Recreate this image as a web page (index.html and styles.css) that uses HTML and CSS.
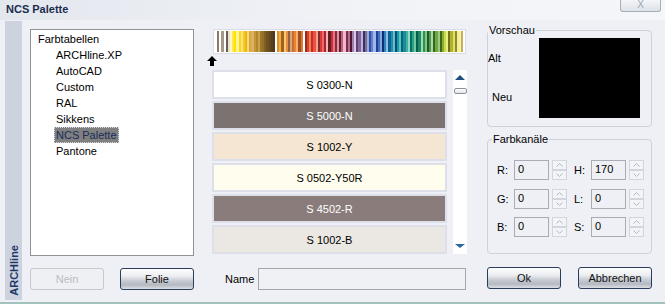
FILE: index.html
```html
<!DOCTYPE html>
<html lang="de">
<head>
  <meta charset="UTF-8" />
  <title>NCS Palette</title>
  <link rel="stylesheet" href="styles.css">
</head>
<body>
  <div class="window">
    <div class="titlebar">
      <span class="title">NCS Palette</span>
      <span class="close">X</span>
    </div>
    <div class="frame">
      <div class="sidebar"><span>ARCHline</span></div>

      <div class="col-left">
        <div class="tree">
          <div class="node root"><span>Farbtabellen</span></div>
          <div class="node"><span>ARCHline.XP</span></div>
          <div class="node"><span>AutoCAD</span></div>
          <div class="node"><span>Custom</span></div>
          <div class="node"><span>RAL</span></div>
          <div class="node"><span>Sikkens</span></div>
          <div class="node"><span class="selected">NCS Palette</span></div>
          <div class="node"><span>Pantone</span></div>
        </div>
        <div class="buttons">
          <button class="btn" disabled>Nein</button>
          <button class="btn">Folie</button>
        </div>
      </div>

      <div class="col-mid">
        <div class="strip" id="strip"></div>
        <svg class="marker" width="10" height="10" viewBox="0 0 10 10">
          <polygon points="5,0 10,5 7,5 7,10 3,10 3,5 0,5" fill="#000"/>
        </svg>
        <div class="list-area">
          <div class="swatches">
            <div class="swatch s-0300n">S 0300-N</div>
            <div class="swatch s-5000n dark">S 5000-N</div>
            <div class="swatch s-1002y">S 1002-Y</div>
            <div class="swatch s-0502y50r">S 0502-Y50R</div>
            <div class="swatch s-4502r dark">S 4502-R</div>
            <div class="swatch s-1002b">S 1002-B</div>
          </div>
          <div class="scroll">
            <span class="tri-up"></span>
            <span class="thumb"></span>
            <span class="fill"></span>
            <span class="tri-down"></span>
          </div>
        </div>
        <div class="name-row">
          <label>Name</label>
          <div class="name-input"></div>
        </div>
      </div>

      <div class="col-right">
        <fieldset class="group">
          <legend class="legend-a">Vorschau</legend>
          <div class="preview">
            <div class="preview-labels">
              <span class="alt">Alt</span>
              <span class="neu">Neu</span>
            </div>
            <div class="preview-box"></div>
          </div>
        </fieldset>

        <fieldset class="group channels">
          <legend class="legend-b">Farbkanäle</legend>
          <div class="fields">
            <div class="field"><span class="lbl">R:</span><span class="num">0</span><span class="spin"><i><svg width="7" height="4"><polyline points="0.5,3.5 3.5,0.5 6.5,3.5" fill="none" stroke="#b3b7c0"/></svg></i><i><svg width="7" height="4"><polyline points="0.5,0.5 3.5,3.5 6.5,0.5" fill="none" stroke="#b3b7c0"/></svg></i></span></div>
            <div class="field"><span class="lbl">H:</span><span class="num">170</span><span class="spin"><i><svg width="7" height="4"><polyline points="0.5,3.5 3.5,0.5 6.5,3.5" fill="none" stroke="#b3b7c0"/></svg></i><i><svg width="7" height="4"><polyline points="0.5,0.5 3.5,3.5 6.5,0.5" fill="none" stroke="#b3b7c0"/></svg></i></span></div>
            <div class="field"><span class="lbl">G:</span><span class="num">0</span><span class="spin"><i><svg width="7" height="4"><polyline points="0.5,3.5 3.5,0.5 6.5,3.5" fill="none" stroke="#b3b7c0"/></svg></i><i><svg width="7" height="4"><polyline points="0.5,0.5 3.5,3.5 6.5,0.5" fill="none" stroke="#b3b7c0"/></svg></i></span></div>
            <div class="field"><span class="lbl">L:</span><span class="num">0</span><span class="spin"><i><svg width="7" height="4"><polyline points="0.5,3.5 3.5,0.5 6.5,3.5" fill="none" stroke="#b3b7c0"/></svg></i><i><svg width="7" height="4"><polyline points="0.5,0.5 3.5,3.5 6.5,0.5" fill="none" stroke="#b3b7c0"/></svg></i></span></div>
            <div class="field"><span class="lbl">B:</span><span class="num">0</span><span class="spin"><i><svg width="7" height="4"><polyline points="0.5,3.5 3.5,0.5 6.5,3.5" fill="none" stroke="#b3b7c0"/></svg></i><i><svg width="7" height="4"><polyline points="0.5,0.5 3.5,3.5 6.5,0.5" fill="none" stroke="#b3b7c0"/></svg></i></span></div>
            <div class="field"><span class="lbl">S:</span><span class="num">0</span><span class="spin"><i><svg width="7" height="4"><polyline points="0.5,3.5 3.5,0.5 6.5,3.5" fill="none" stroke="#b3b7c0"/></svg></i><i><svg width="7" height="4"><polyline points="0.5,0.5 3.5,3.5 6.5,0.5" fill="none" stroke="#b3b7c0"/></svg></i></span></div>
          </div>
        </fieldset>

        <div class="buttons buttons-right">
          <button class="btn">Ok</button>
          <button class="btn">Abbrechen</button>
        </div>
      </div>
    </div>
  </div>

  <script>
    // farbleiste oben
    const colors = [
      "#fff","#8c7b6b","#fff","#a89888","#fff","#6e5e50","#e8e0d0",
      "#fff8c0","#ffe84a","#ffe000","#fff2a0","#ffd800",
      "#fbe090","#f8c830","#f0b800","#f5d890","#e0a820",
      "#d8b070","#c89830","#b08828","#c8a050","#a07820","#907030","#806020","#705020","#604818","#584020","#4e3a1c",
      "#fff",
      "#d89030","#f0b040","#a06020","#f8c878","#e89040","#906040","#e0a070","#c07030","#f08030","#f8b070","#a05020","#e07830",
      "#fff","#903020","#e04020","#f08060","#c03020","#f05040","#f8a090","#803028","#d83838","#f06868","#a02830","#f8b0b0","#602020","#c83040","#f07080","#803040",
      "#e090a0","#602030","#c06080","#f0b8c8","#802850","#b07090","#501830",
      "#a080b0","#d8c8e0","#604070","#8068a0","#c0b0d8","#403060","#7070a0","#a0a8d0",
      "#3050b0","#6080d0","#a0b8e8","#204090","#4070c0","#80a8e0","#103070",
      "#3080c0","#90c0e0","#106090","#2090b0","#70b8d0","#005070","#1898a8","#60c0c8","#006878","#208898",
      "#40b0a0","#90d8c8","#007060","#30a080","#70c8a8","#006048","#208868","#a0d8c0",
      "#30904a","#80c880","#205830","#509850","#b0d8a0","#306828","#70a840","#a0c880","#406818","#88b030",
      "#c8d850","#e8f080","#707020","#b0b030","#e0e060","#908838","#f0f090","#fff0a0","#c0b060"
    ];
    const strip = document.getElementById("strip");
    colors.forEach(c => {
      const s = document.createElement("span");
      s.style.background = c;
      strip.appendChild(s);
    });
  </script>
</body>
</html>
```

FILE: styles.css
```css
* {
  box-sizing: border-box;
}
body {
  margin: 0;
  font-family: "Liberation Sans", Arial, sans-serif;
  font-size: 11px;
  color: #000;
  background: #fff;
}
.window {
  width: 665px;
  height: 304px;
  background: #eff0f5;
  border-bottom: 2px solid #a3c4bc;
  display: flex;
  flex-direction: column;
}
.titlebar {
  height: 20px;
  display: flex;
  justify-content: space-between;
  align-items: flex-start;
  background: linear-gradient(90deg, #e3e7ee, #f1f3f7 55%, #f5f6f9);
}
.title {
  font-weight: bold;
  color: #1b2c4e;
  margin: 1px 0 0 6px;
  line-height: 16px;
}
.close {
  width: 41px;
  height: 12px;
  margin-right: 4px;
  border: 1px solid #a8aeb8;
  border-top: none;
  border-radius: 0 0 3px 3px;
  background: linear-gradient(#f4f5f8, #dde1e8);
  color: #a0a6b0;
  font-size: 10px;
  line-height: 9px;
  text-align: center;
}
.frame {
  flex: 1;
  display: flex;
  padding-left: 5px;
}
.sidebar {
  width: 17px;
  margin: 1px 0 2px;
  background: #ccd3df;
  display: flex;
  flex-direction: column;
  justify-content: flex-end;
  align-items: center;
  padding-bottom: 4px;
}
.sidebar span {
  writing-mode: vertical-rl;
  transform: rotate(180deg);
  font-weight: bold;
  color: #1d3766;
  line-height: 12px;
}

/* linke spalte */
.col-left {
  width: 164px;
  margin-left: 8px;
  padding-top: 9px;
  display: flex;
  flex-direction: column;
}
.tree {
  height: 227px;
  background: #fff;
  border: 1px solid #8f9296;
  padding-top: 1px;
}
.node {
  height: 16px;
  line-height: 16px;
  padding-left: 23px;
}
.node.root {
  padding-left: 5px;
}
.node span {
  display: inline-block;
  padding: 0 2px;
}
.node .selected {
  background: #808080;
  color: #1a2c5a;
  outline: 1px dotted #d5d8e0;
  outline-offset: -1px;
}
.buttons {
  display: flex;
  justify-content: space-between;
  margin-top: 12px;
}
.btn {
  width: 74px;
  height: 22px;
  padding: 0;
  font: 11px "Liberation Sans", Arial, sans-serif;
  color: #111;
  border: 1px solid #2b3d5c;
  border-radius: 3px;
  background: linear-gradient(#fdfdfd 0%, #eceef1 35%, #c6cad1 60%, #b5b9c1 80%, #dcdfe4 100%);
}
.btn:disabled {
  border-color: #c5c8ce;
  background: #eff0f3;
  color: #b9bcc3;
}

/* mittlere spalte */
.col-mid {
  width: 260px;
  margin-left: 13px;
  padding-top: 9px;
}
.strip {
  margin-left: 6px;
  width: 253px;
  height: 25px;
  border: 1px solid #dadde5;
  padding: 1px;
  display: flex;
  background: #fff;
}
.strip span {
  flex: 1;
}
.marker {
  display: block;
  margin-top: 2px;
}
.list-area {
  display: flex;
  margin-top: 4px;
  height: 184px;
}
.swatches {
  margin-left: 5px;
  width: 235px;
  display: flex;
  flex-direction: column;
  gap: 2px;
}
.swatch {
  height: 29px;
  border: 2px solid #dde0e9;
  display: flex;
  align-items: center;
  justify-content: center;
}
.swatch.dark {
  color: #fff;
}
.s-0300n { background: #fff; }
.s-5000n { background: #7b7370; }
.s-1002y { background: #f5e6d4; }
.s-0502y50r { background: #fffdee; }
.s-4502r { background: #8a7c7a; }
.s-1002b { background: #ebe8e4; }
.scroll {
  width: 14px;
  margin-left: 6px;
  background: #fff;
  display: flex;
  flex-direction: column;
  align-items: center;
  padding: 5px 0 6px;
}
.tri-up {
  width: 0;
  height: 0;
  border-left: 5px solid transparent;
  border-right: 5px solid transparent;
  border-bottom: 5px solid #1e4f80;
}
.thumb {
  width: 13px;
  height: 6px;
  margin-top: 8px;
  border: 1px solid #8c9098;
  border-radius: 2px;
  background: linear-gradient(#fdfdfd, #e2e4e8);
}
.fill {
  flex: 1;
}
.tri-down {
  width: 0;
  height: 0;
  border-left: 5px solid transparent;
  border-right: 5px solid transparent;
  border-top: 4px solid #2a6aa0;
}
.name-row {
  display: flex;
  align-items: center;
  margin-top: 14px;
  padding-left: 18px;
}
.name-input {
  width: 208px;
  height: 22px;
  margin-left: 4px;
  border: 1px solid #a2a5ab;
  background: #f0f1f5;
}

/* rechte spalte */
.col-right {
  width: 165px;
  margin-left: 20px;
  padding-top: 4px;
  display: flex;
  flex-direction: column;
}
.group {
  margin: 0;
  padding: 0;
  width: 165px;
  border: 1px solid #cdd1da;
  border-radius: 4px;
}
.group legend {
  font-size: 11px;
  line-height: 12px;
  padding: 0 1px;
}
.legend-a {
  margin-left: 0;
}
.legend-b {
  margin-left: 4px;
}
.preview {
  display: flex;
  padding: 2px 10px 8px 0;
}
.preview-labels {
  width: 51px;
  display: flex;
  flex-direction: column;
  padding-top: 12px;
  line-height: 16px;
}
.preview-labels .neu {
  margin-top: 23px;
  padding-left: 4px;
}
.preview-box {
  width: 101px;
  height: 80px;
  background: #000;
}
.channels {
  margin-top: 6px;
}
.fields {
  display: grid;
  grid-template-columns: 70px 70px;
  column-gap: 7px;
  row-gap: 8.5px;
  padding: 15px 0 16px 9px;
}
.field {
  display: flex;
  align-items: flex-start;
}
.lbl {
  width: 17px;
  line-height: 20px;
}
.num {
  width: 35px;
  height: 20px;
  border: 1px solid #a9acb4;
  background: #eff0f5;
  padding: 1px 0 0 3px;
  line-height: 14px;
}
.spin {
  width: 15px;
  margin-left: 3px;
  display: flex;
  flex-direction: column;
}
.spin i {
  height: 10px;
  border: 1px solid #d2d5dc;
  background: #f3f4f7;
  display: flex;
  align-items: center;
  justify-content: center;
}
.spin svg {
  display: block;
}
.buttons-right {
  margin-top: 13px;
}
```
